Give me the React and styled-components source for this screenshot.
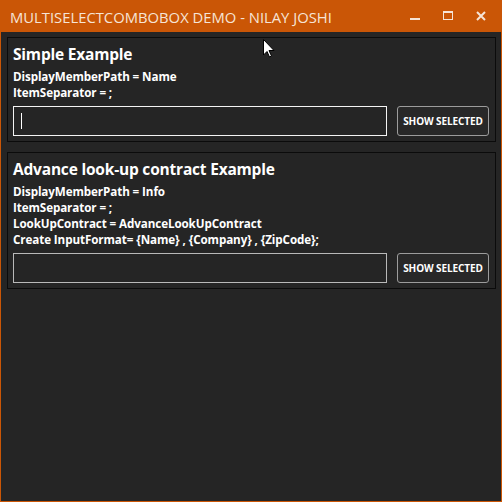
import React from 'react'
import styled, { createGlobalStyle } from 'styled-components'

const GlobalStyle = createGlobalStyle`
  html, body {
    margin: 0;
    padding: 0;
    background: #252525;
  }
  * {
    box-sizing: border-box;
  }
`

const ACCENT = '#ca5606'

const Window = styled.div`
  position: relative;
  width: 502px;
  height: 502px;
  display: flex;
  flex-direction: column;
  background: #252525;
  border: 1px solid ${ACCENT};
  border-top: none;
  font-family: "Segoe UI", "Open Sans", sans-serif;
  color: #fff;
`

const TitleBar = styled.div`
  height: 32px;
  flex: none;
  display: flex;
  align-items: center;
  background: ${ACCENT};
  padding-left: 9px;
`

const WindowTitle = styled.div`
  flex: 1;
  font-size: 14.8px;
  color: #f6e4d6;
  padding-top: 1px;
`

const CaptionButtons = styled.div`
  display: flex;
  align-items: center;
  height: 100%;
  padding-right: 4px;
`

const CaptionButton = styled.div`
  width: 33px;
  height: 100%;
  display: flex;
  align-items: center;
  justify-content: center;
  color: #f6e4d6;
`

const Content = styled.div`
  flex: 1;
  display: flex;
  flex-direction: column;
  gap: 10px;
  padding: 5px 5px 0 6px;
`

const Panel = styled.section`
  border: 1px solid #0b0b0b;
  padding: 5px 6px 5px 5px;
`

const PanelTitle = styled.div`
  font-size: 15.5px;
  font-weight: 700;
  line-height: 22px;
  margin-bottom: 4px;
  letter-spacing: -0.2px;
`

const InfoLine = styled.div`
  font-size: 11.65px;
  font-weight: 700;
  line-height: 16px;
  letter-spacing: -0.1px;
`

const Row = styled.div`
  display: flex;
  gap: 10px;
  margin-top: 5px;
  height: 30px;
`

const ComboInput = styled.div`
  position: relative;
  flex: 1;
  border: 1px solid ${p => (p.$focused ? '#f4f4f4' : '#b9b9b9')};
  background: #252525;
`

const Caret = styled.span`
  position: absolute;
  left: 7px;
  top: 6px;
  width: 1px;
  height: 16px;
  background: #fff;
`

const ActionButton = styled.button`
  width: 92px;
  flex: none;
  border: 1px solid #9c9c9c;
  border-radius: 3px;
  background: #282828;
  color: #fff;
  font-family: inherit;
  font-size: 10px;
  font-weight: 700;
  letter-spacing: -0.1px;
  text-transform: uppercase;
  padding: 0;
`

const Pointer = styled.svg`
  position: absolute;
  left: 262px;
  top: 39px;
`

const Minimize = () => (
  <svg width="10" height="10" viewBox="0 0 10 10">
    <rect x="0" y="7" width="10" height="2" fill="currentColor" />
  </svg>
)

const Maximize = () => (
  <svg width="10" height="10" viewBox="0 0 10 10">
    <rect x="0.5" y="0.5" width="9" height="8" fill="none" stroke="currentColor" />
    <rect x="0" y="0" width="10" height="2" fill="currentColor" />
  </svg>
)

const Close = () => (
  <svg width="10" height="10" viewBox="0 0 10 10">
    <path d="M1 1 L9 9 M9 1 L1 9" stroke="currentColor" strokeWidth="2" />
  </svg>
)

const examples = [
  {
    title: 'Simple Example',
    lines: ['DisplayMemberPath = Name', 'ItemSeparator = ;'],
    focused: true
  },
  {
    title: 'Advance look-up contract Example',
    lines: [
      'DisplayMemberPath = Info',
      'ItemSeparator = ;',
      'LookUpContract = AdvanceLookUpContract',
      'Create InputFormat= {Name} , {Company} , {ZipCode};'
    ],
    focused: false
  }
]

export default function App() {
  return (
    <Window>
      <GlobalStyle />
      <TitleBar>
        <WindowTitle>MULTISELECTCOMBOBOX DEMO - NILAY JOSHI</WindowTitle>
        <CaptionButtons>
          <CaptionButton><Minimize /></CaptionButton>
          <CaptionButton><Maximize /></CaptionButton>
          <CaptionButton><Close /></CaptionButton>
        </CaptionButtons>
      </TitleBar>
      <Content>
        {examples.map(ex => (
          <Panel key={ex.title}>
            <PanelTitle>{ex.title}</PanelTitle>
            {ex.lines.map(line => <InfoLine key={line}>{line}</InfoLine>)}
            <Row>
              <ComboInput $focused={ex.focused}>
                {ex.focused && <Caret />}
              </ComboInput>
              <ActionButton>Show Selected</ActionButton>
            </Row>
          </Panel>
        ))}
      </Content>
      <Pointer width="12" height="19" viewBox="0 0 12 19">
        <path d="M0.5 0.5 L0.5 16 L4 12.5 L6.5 18 L8.5 17 L6 11.5 L11 11.5 Z"
          fill="#fff" stroke="#000" strokeWidth="1" />
      </Pointer>
    </Window>
  )
}
